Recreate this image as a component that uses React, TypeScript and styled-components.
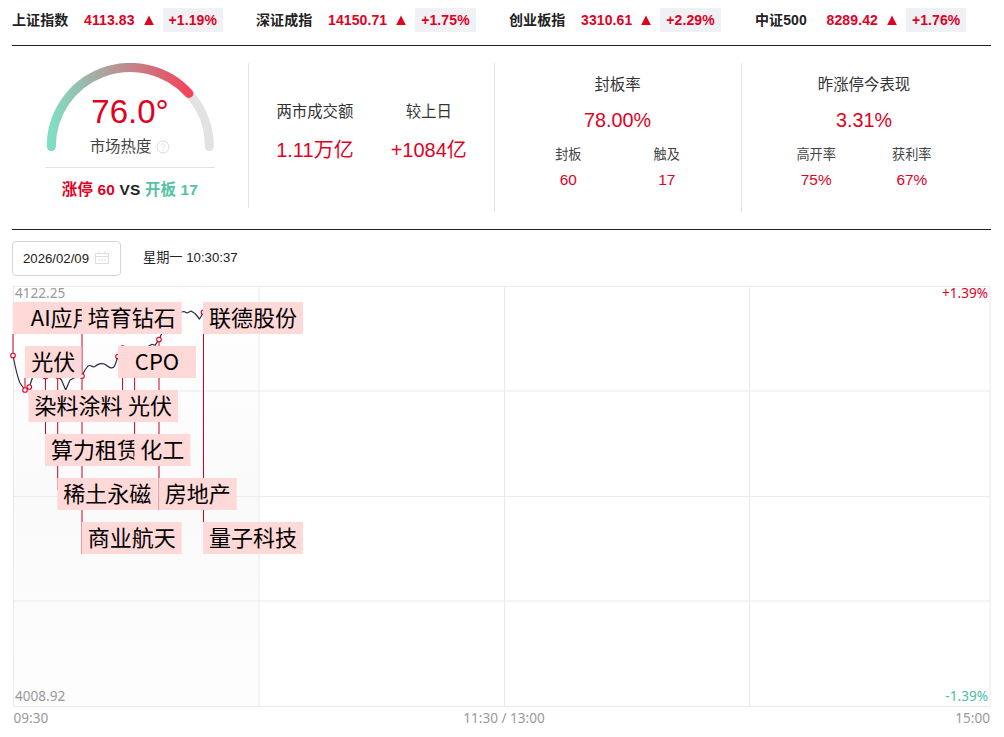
import React from 'react';
import styled, {createGlobalStyle} from "styled-components";

type IndexType = {
    name: string
    value: string
    change: string
}
type StatType = {
    title: string
    value: string
}
type TagType = {
    text: string
    x: number
    y: number
    width: number
}
type StemType = {
    x: number
    from: number
    to: number
}

const indexes: IndexType[] = [
    {name: '上证指数', value: '4113.83', change: '+1.19%'},
    {name: '深证成指', value: '14150.71', change: '+1.75%'},
    {name: '创业板指', value: '3310.61', change: '+2.29%'},
    {name: '中证500', value: '8289.42', change: '+1.76%'},
]

const tags: TagType[] = [
    {text: 'AI应用', x: 12.7, y: 302, width: 100},
    {text: '光伏', x: 25, y: 346, width: 56.5},
    {text: '染料涂料', x: 28.5, y: 390, width: 100},
    {text: '算力租赁', x: 45, y: 434, width: 100},
    {text: '稀土永磁', x: 57.3, y: 478, width: 100},
    {text: '培育钻石', x: 81.7, y: 302, width: 100},
    {text: '商业航天', x: 81.7, y: 522, width: 100},
    {text: 'CPO', x: 118, y: 346, width: 78},
    {text: '光伏', x: 122, y: 390, width: 56},
    {text: '化工', x: 134.3, y: 434, width: 56},
    {text: '房地产', x: 158.7, y: 478, width: 78},
    {text: '联德股份', x: 203, y: 302, width: 100},
    {text: '量子科技', x: 203, y: 522, width: 100},
]

const stems: StemType[] = [
    {x: 13, from: 334, to: 355},
    {x: 25, from: 378, to: 390},
    {x: 45.5, from: 377, to: 450},
    {x: 57.7, from: 376, to: 490},
    {x: 82, from: 334, to: 554},
    {x: 122.5, from: 348, to: 400},
    {x: 134.6, from: 360, to: 450},
    {x: 159, from: 340, to: 510},
    {x: 203.5, from: 312, to: 530},
]

const points = [
    [13, 355.5], [25, 390], [29.3, 387], [45.5, 376.5], [57.7, 376], [82, 376],
    [118, 356.5], [122.5, 348], [159, 339.5], [203.5, 312.3],
]

const App = () => {
    return (
        <Page>
            <GlobalStyle/>
            <Indexes>
                {indexes.map(i => <IndexItem key={i.name}>
                    <IndexName>{i.name}</IndexName>
                    <IndexValue>{i.value}</IndexValue>
                    <Triangle viewBox="0 0 10 10"><path d="M5 0.5L9.8 10H0.2z" fill="#e2001f"/></Triangle>
                    <Change>{i.change}</Change>
                </IndexItem>)}
            </Indexes>
            <Summary>
                <HeatCell>
                    <Gauge/>
                    <Versus>
                        <Up>涨停 60</Up> VS <Down>开板 17</Down>
                    </Versus>
                </HeatCell>
                <TurnoverCell>
                    <Turnover title="两市成交额" value="1.11万亿"/>
                    <Turnover title="较上日" value="+1084亿"/>
                </TurnoverCell>
                <RateCell
                    main={{title: '封板率', value: '78.00%'}}
                    gap={72}
                    items={[{title: '封板', value: '60'}, {title: '触及', value: '17'}]}
                />
                <RateCell
                    main={{title: '昨涨停今表现', value: '3.31%'}}
                    gap={56}
                    items={[{title: '高开率', value: '75%'}, {title: '获利率', value: '67%'}]}
                />
            </Summary>
            <Toolbar>
                <DatePicker>
                    2026/02/09
                    <CalendarIcon/>
                </DatePicker>
                <Clock>星期一 10:30:37</Clock>
            </Toolbar>
            <Chart/>
        </Page>
    );
};

const Gauge = () => {
    return (
        <GaugeBox>
            <GaugeArc viewBox="0 0 170 90">
                <defs>
                    <linearGradient id="heat" gradientUnits="userSpaceOnUse" x1="6" y1="0" x2="148" y2="0">
                        <stop offset="0" stopColor="#80dec5"/>
                        <stop offset="1" stopColor="#f64058"/>
                    </linearGradient>
                </defs>
                <path d="M6.3 83.5A79 79 0 0 1 164.3 83.5" stroke="#e2e2e2"/>
                <path d="M6.3 83.5A79 79 0 0 1 143.9 30.5" stroke="url(#heat)"/>
            </GaugeArc>
            <Degree>76.0°</Degree>
            <HeatName>
                市场热度
                <HelpIcon viewBox="0 0 14 14">
                    <circle cx="7" cy="7" r="6"/>
                    <path d="M5.2 5.6C5.2 3.2 8.8 3.3 8.8 5.5C8.8 6.8 7 6.9 7 8.3M7 9.5V10.6"/>
                </HelpIcon>
            </HeatName>
        </GaugeBox>
    )
}

const Turnover = (props: StatType) => {
    return (
        <TurnoverItem>
            <Title>{props.title}</Title>
            <TurnoverValue>{props.value}</TurnoverValue>
        </TurnoverItem>
    )
}

type RateCellPropsType = {
    main: StatType
    gap: number
    items: StatType[]
}
const RateCell = (props: RateCellPropsType) => {
    return (
        <RateBox>
            <Title>{props.main.title}</Title>
            <RateValue>{props.main.value}</RateValue>
            <Details $gap={props.gap}>
                {props.items.map(i => <Detail key={i.title}>
                    <DetailTitle>{i.title}</DetailTitle>
                    <DetailValue>{i.value}</DetailValue>
                </Detail>)}
            </Details>
        </RateBox>
    )
}

const CalendarIcon = () => {
    return (
        <Calendar viewBox="0 0 14 14">
            <path d="M.5 2.5H13.5V12.5H.5zM.5 5.5H13.5M4 .5V3.5M10 .5V3.5"/>
            <path d="M3 9H5M6 9H8M9 9H11"/>
        </Calendar>
    )
}

const Chart = () => {
    return (
        <ChartSvg viewBox="0 280 1004 457">
            <defs>
                <linearGradient id="area" x1="0" y1="0" x2="0" y2="1">
                    <stop offset="0" stopColor="#ffffff"/>
                    <stop offset="0.5" stopColor="#fafafa"/>
                    <stop offset="1" stopColor="#fdfdfd"/>
                </linearGradient>
            </defs>
            <rect x="13" y="287" width="246" height="420" fill="url(#area)"/>
            <g stroke="#ebebeb">
                <path d="M13 286.5H990M13 391H990M13 496.5H990M13 601H990M13 706.5H990"/>
                <path d="M13.5 287V707M259 287V707M504.5 287V707M749.5 287V707M990 287V707"/>
            </g>
            <path
                d="M13 355.5C15 366 17 376 20 383L25 390L29.3 387L33 376L40 370L45.5 376.5L52 372L57.7 376L61.5 380L65.7 390L70 380L76 377L82 376L85 370L88 366C91 364 92 368 95 366.5C98 363.5 103 362.5 106 365C109 367.5 113 370 115 365L118 356.5L122.5 348L130 352L140 350L148 346.5L152 344.3L155 345.3L159 339.5L162 333L170 320L181.5 312L184 311.5L187 313L191 311L195 313.5L199.5 319L203.5 312.3"
                fill="none" stroke="#2b2b45" strokeWidth="1.2" strokeLinejoin="round"
            />
            {stems.map(s => <path key={s.x} d={`M${s.x} ${s.from}V${s.to}`} fill="none" stroke="#d4001f"/>)}
            {points.map(p => <circle key={p[0]} cx={p[0]} cy={p[1]} r="2.3" fill="#fff" stroke="#e2001f" strokeWidth="1.1"/>)}
            {tags.map(t => <g key={t.x + '-' + t.y}>
                <rect x={t.x} y={t.y} width={t.width} height="32" fill="#ffd8d8"/>
                <TagText x={t.x + t.width / 2} y={t.y + 24}>{t.text}</TagText>
            </g>)}
            <AxisText x="15" y="298">4122.25</AxisText>
            <AxisText x="15" y="701">4008.92</AxisText>
            <AxisText x="988" y="298" textAnchor="end" $color="#e2001f">+1.39%</AxisText>
            <AxisText x="988" y="701" textAnchor="end" $color="#4ac0a0">-1.39%</AxisText>
            <AxisText x="13.5" y="723">09:30</AxisText>
            <AxisText x="504" y="723" textAnchor="middle">11:30 / 13:00</AxisText>
            <AxisText x="990" y="723" textAnchor="end">15:00</AxisText>
        </ChartSvg>
    )
}

const GlobalStyle = createGlobalStyle`
  * {
    box-sizing: border-box;
  }

  body {
    margin: 0;
    background-color: #fff;
    color: #222;
    font-family: "Liberation Sans", "Noto Sans CJK SC", sans-serif;
    font-size: 14px;
  }
`

const Page = styled.div`
  width: 1004px;
  height: 737px;
  overflow: hidden;
`

const Indexes = styled.div`
  display: grid;
  grid-template-columns: 244px 253px 246px 1fr;
  align-items: center;
  height: 46px;
  margin: 0 13px 0 12px;
  padding-bottom: 5px;
  border-bottom: 1px solid #222;
  font-weight: bold;
`

const IndexItem = styled.div`
  display: flex;
  align-items: center;
  line-height: 24px;
  letter-spacing: 0.1px;
`

const IndexName = styled.span`
  min-width: 56px;
  margin-right: 15.6px;
`

const IndexValue = styled.span`
  color: #e2001f;
`

const Triangle = styled.svg`
  width: 10px;
  height: 10px;
  margin: 0 9px;
`

const Change = styled.span`
  height: 24px;
  padding: 0 6px;
  background-color: #f0f1f5;
  color: #e2001f;
`

const Summary = styled.div`
  display: grid;
  grid-template-columns: 237px 246px 247px 1fr;
  height: 184px;
  margin: 0 13px 0 12px;
  padding-top: 17px;
  border-bottom: 1px solid #222;
`

const HeatCell = styled.div`
  height: 145px;
  padding-left: 33px;
  border-right: 1px solid #e5e6ea;
`

const GaugeBox = styled.div`
  position: relative;
  width: 170px;
  height: 105px;
  border-bottom: 1px solid #e2e2e2;
  text-align: center;
`

const GaugeArc = styled.svg`
  position: absolute;
  left: 0;
  top: 0;
  width: 170px;
  height: 90px;
  fill: none;
  stroke-width: 9px;
  stroke-linecap: round;
`

const Degree = styled.div`
  padding-top: 29px;
  color: #e2001f;
  font-size: 33px;
  line-height: 40px;
`

const HeatName = styled.div`
  display: flex;
  justify-content: center;
  align-items: center;
  gap: 5px;
  font-size: 15.4px;
  line-height: 30px;
  color: #444;
`

const HelpIcon = styled.svg`
  width: 14px;
  height: 14px;
  fill: none;
  stroke: #ddd;
`

const Versus = styled.div`
  width: 170px;
  padding-top: 11px;
  font-size: 15.4px;
  font-weight: bold;
  line-height: 22px;
  letter-spacing: 0.2px;
  text-align: center;
`

const Up = styled.span`
  color: #e2001f;
`

const Down = styled.span`
  color: #55c3a3;
`

const TurnoverCell = styled.div`
  display: flex;
  justify-content: center;
  gap: 37px;
  height: 149px;
  padding-top: 38px;
  border-right: 1px solid #e5e6ea;
`

const TurnoverItem = styled.div`
  text-align: center;
`

const Title = styled.div`
  font-size: 15.4px;
  line-height: 22px;
  color: #333;
`

const TurnoverValue = styled.div`
  margin-top: 12px;
  color: #e2001f;
  font-size: 20px;
  line-height: 30px;
`

const RateBox = styled.div`
  height: 149px;
  padding-top: 11px;
  padding-right: 2px;
  text-align: center;

  & + & {
    border-left: 1px solid #e5e6ea;
    margin-left: -1px;
    padding-right: 5px;
  }
`

const RateValue = styled.div`
  margin-top: 9px;
  color: #e2001f;
  font-size: 19.8px;
  line-height: 30px;
`

const Details = styled.div<{ $gap: number }>`
  display: flex;
  justify-content: center;
  gap: ${props => props.$gap}px;
  margin-top: 10px;
`

const Detail = styled.div`
  line-height: 20px;
`

const DetailTitle = styled.div`
  color: #444;
  font-size: 13.2px;
`

const DetailValue = styled.div`
  margin-top: 5px;
  color: #e2001f;
  font-size: 15.4px;
`

const Toolbar = styled.div`
  display: flex;
  height: 50px;
  padding: 11px 12px 0;
  font-size: 13.2px;
`

const DatePicker = styled.div`
  display: flex;
  align-items: center;
  gap: 6px;
  width: 109px;
  height: 35px;
  padding-left: 10px;
  border: 1px solid #d5d5d5;
  border-radius: 4px;
`

const Calendar = styled.svg`
  width: 14px;
  height: 14px;
  margin-top: -2px;
  fill: none;
  stroke: #ddd;
`

const Clock = styled.div`
  margin-left: 22px;
  line-height: 33px;
`

const ChartSvg = styled.svg`
  display: block;
  width: 1004px;
  height: 457px;
`

const TagText = styled.text`
  font-family: "Noto Sans CJK SC", sans-serif;
  font-size: 22px;
  text-anchor: middle;
  fill: #000;
`

const AxisText = styled.text<{ $color?: string }>`
  font-family: "Noto Sans", sans-serif;
  font-size: 13.6px;
  fill: ${props => props.$color || '#999'};
`

export default App;
